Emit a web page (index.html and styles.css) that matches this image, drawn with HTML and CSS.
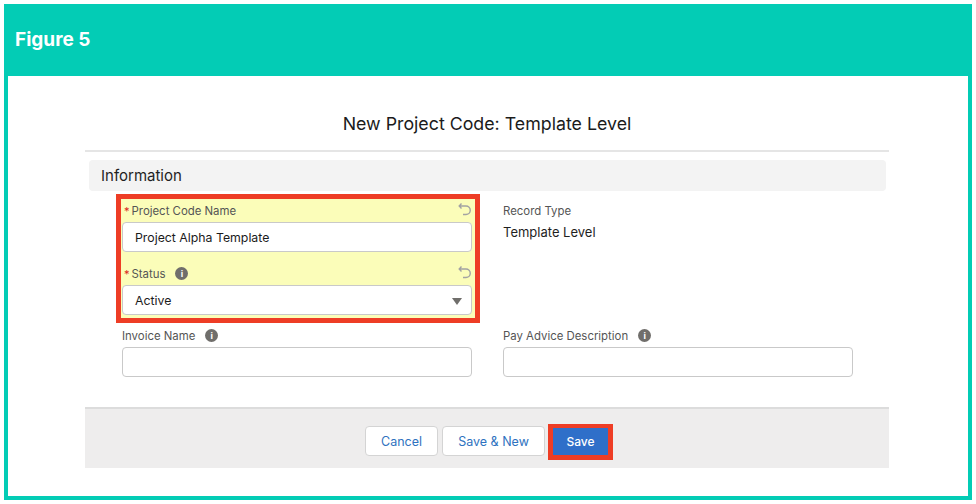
FILE: index.html
```html
<!DOCTYPE html>
<html lang="en">
<head>
  <meta charset="UTF-8" />
  <title>Figure 5</title>
  <link rel="stylesheet" href="styles.css">
</head>
<body>
  <div class="figure">
    <div class="figure-title">Figure 5</div>
    <div class="figure-body">
      <h1 class="modal-title">New Project Code: Template Level</h1>
      <div class="section-head">Information</div>

      <div class="row row-top">
        <div class="highlight">
          <div class="field-yellow">
            <div class="label-line">
              <span class="req">*</span><span class="label">Project Code Name</span>
              <svg class="undo" viewBox="0 0 14 14"><path d="M3.500 1.500 1.200 4l2.300 2.500M1.500 4H8a4 4 0 0 1 0 8.500H5" /></svg>
            </div>
            <div class="input">Project Alpha Template</div>
          </div>
          <div class="field-yellow second">
            <div class="label-line">
              <span class="req">*</span><span class="label">Status</span>
              <span class="info">i</span>
              <svg class="undo" viewBox="0 0 14 14"><path d="M3.500 1.500 1.200 4l2.300 2.500M1.500 4H8a4 4 0 0 1 0 8.500H5" /></svg>
            </div>
            <div class="input select">Active<span class="caret"></span></div>
          </div>
        </div>
        <div class="field field-right">
          <div class="label-line"><span class="label">Record Type</span></div>
          <div class="static-value">Template Level</div>
        </div>
      </div>

      <div class="row row-bottom">
        <div class="field">
          <div class="label-line"><span class="label">Invoice Name</span><span class="info">i</span></div>
          <div class="input"></div>
        </div>
        <div class="field field-right">
          <div class="label-line"><span class="label">Pay Advice Description</span><span class="info">i</span></div>
          <div class="input"></div>
        </div>
      </div>

      <div class="footer">
        <button class="btn">Cancel</button>
        <button class="btn btn-wide">Save &amp; New</button>
        <div class="save-mark"><button class="btn btn-save">Save</button></div>
      </div>
    </div>
  </div>
</body>
</html>
```

FILE: styles.css
```css
* {
  box-sizing: border-box;
}

body {
  margin: 0;
  background-color: #fff;
  font-family: Inter, "Liberation Sans", sans-serif;
}

.figure {
  margin: 4px;
  width: 968px;
  height: 496px;
  display: flex;
  flex-direction: column;
  background-color: #03ccb5;
}

.figure-title {
  height: 72px;
  padding: 25px 0 0 11px;
  font-size: 19px;
  font-weight: 700;
  line-height: 22px;
  color: #fff;
}

.figure-body {
  flex: 1;
  margin: 0 4px 4px;
  padding: 0 79px 0 77px;
  background-color: #fff;
}

.modal-title {
  margin: 0;
  height: 76px;
  padding-top: 35px;
  border-bottom: 2px solid #e5e5e5;
  text-align: center;
  font-size: 17.8px;
  font-weight: 400;
  line-height: 25px;
  color: #1b1b1b;
}

.section-head {
  margin: 8px 3px 3px 4px;
  height: 31px;
  padding: 0 12px;
  border-radius: 4px;
  background-color: #f3f3f3;
  font-size: 15px;
  line-height: 31px;
  color: #1f1f1f;
}

.row {
  display: flex;
}

.row-top {
  padding-left: 31px;
  height: 129px;
}

.row-bottom {
  padding: 1px 0 0 37px;
  height: 84px;
}

.highlight {
  width: 364px;
  height: 129px;
  border: 5px solid #ee3d25;
  background-color: #fbfdb9;
  padding: 0 3px 0 1px;
}

.field-yellow.second {
  margin-top: 10px;
}

.field {
  width: 350px;
}

.row-bottom .field-right {
  margin-left: 31px;
}

.row-top .field-right {
  margin-left: 23px;
  padding-top: 5px;
}

.label-line {
  display: flex;
  align-items: center;
  height: 23px;
  font-size: 11.4px;
  color: #555;
}

.field-yellow .label-line {
  padding-left: 2px;
}

.req {
  color: #d8261c;
  margin-right: 2px;
  font-size: 11px;
}

.info {
  width: 13px;
  height: 13px;
  margin-left: 10px;
  border-radius: 50%;
  background-color: #706e6b;
  color: #fff;
  font-size: 9px;
  font-weight: 700;
  line-height: 13px;
  text-align: center;
}

.undo {
  width: 14px;
  height: 14px;
  margin: -3px 0 0 auto;
  fill: none;
  stroke: #a3a3a3;
  stroke-width: 1.4;
}

.input {
  height: 30px;
  padding: 0 12px;
  border: 1px solid #c9c9c9;
  border-radius: 4px;
  background-color: #fff;
  font-size: 12.3px;
  line-height: 29px;
  color: #1b1b1b;
}

.select {
  position: relative;
}

.caret {
  position: absolute;
  right: 9px;
  top: 12px;
  border-left: 5.5px solid transparent;
  border-right: 5.5px solid transparent;
  border-top: 7px solid #706e6b;
}

.static-value {
  margin-top: 1px;
  font-size: 13px;
  line-height: 18px;
  color: #1f1f1f;
}

.footer {
  height: 61px;
  border-top: 2px solid #dcdcdc;
  background-color: #eeeded;
  display: flex;
  justify-content: center;
  align-items: center;
  gap: 4px;
  padding: 5px 0 0 4px;
}

.btn {
  height: 30px;
  width: 73px;
  padding: 0;
  border: 1px solid #d4d4d4;
  border-radius: 4px;
  background-color: #fff;
  font-family: inherit;
  font-size: 12.5px;
  color: #2e72c0;
}

.btn-wide {
  width: 103px;
}

.save-mark {
  margin: 2px 0 0 -1px;
  padding: 4px 5px 5px;
  background-color: #ee3d25;
  height: 36px;
}

.btn-save {
  display: block;
  width: 55px;
  height: 27px;
  border: none;
  border-radius: 0;
  background-color: #2f6fc9;
  color: #fff;
  font-size: 12px;
  font-weight: 500;
}
```
